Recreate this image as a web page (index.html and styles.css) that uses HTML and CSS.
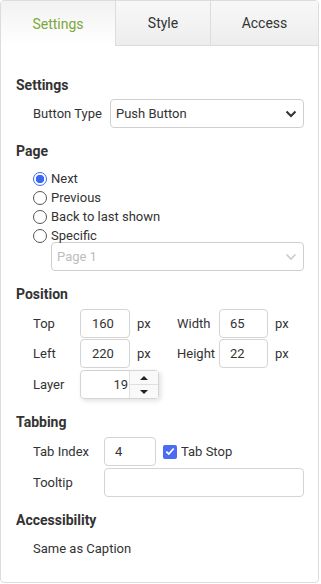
FILE: index.html
```html
<!DOCTYPE html>
<html>
<head>
<meta charset="utf-8">
<link rel="stylesheet" href="styles.css">
</head>
<body>
<div class="panel">
  <div class="tabs">
    <div class="tab active">Settings</div>
    <div class="tab t-style">Style</div>
    <div class="tab t-access">Access</div>
  </div>
  <div class="content">
    <h3 class="heading first">Settings</h3>
    <div class="row">
      <span class="lbl lbl-bt">Button Type</span>
      <div class="select">
        <span>Push Button</span>
        <svg class="chev" width="12" height="8" viewBox="0 0 12 8"><path d="M1.5 1.5 L6 6 L10.5 1.5" fill="none" stroke="#333" stroke-width="2"/></svg>
      </div>
    </div>

    <h3 class="heading">Page</h3>
    <div class="radios">
      <div class="radio-row"><span class="radio checked"></span><span>Next</span></div>
      <div class="radio-row"><span class="radio"></span><span>Previous</span></div>
      <div class="radio-row"><span class="radio"></span><span>Back to last shown</span></div>
      <div class="radio-row"><span class="radio"></span><span>Specific</span></div>
      <div class="select disabled">
        <span>Page 1</span>
        <svg class="chev" width="12" height="8" viewBox="0 0 12 8"><path d="M1.5 1.5 L6 6 L10.5 1.5" fill="none" stroke="#ccc" stroke-width="1.6"/></svg>
      </div>
    </div>

    <h3 class="heading">Position</h3>
    <div class="row pos">
      <span class="lbl lbl-pos">Top</span>
      <div class="input num">160</div>
      <span class="unit">px</span>
      <span class="lbl lbl-pos2">Width</span>
      <div class="input num2">65</div>
      <span class="unit">px</span>
    </div>
    <div class="row pos r2">
      <span class="lbl lbl-pos">Left</span>
      <div class="input num">220</div>
      <span class="unit">px</span>
      <span class="lbl lbl-pos2">Height</span>
      <div class="input num2">22</div>
      <span class="unit">px</span>
    </div>
    <div class="row pos r3">
      <span class="lbl lbl-pos">Layer</span>
      <div class="spin">
        <div class="spin-val">19</div>
        <div class="spin-btns">
          <div class="spin-btn up"><span class="tri-up"></span></div>
          <div class="spin-btn down"><span class="tri-down"></span></div>
        </div>
      </div>
    </div>

    <h3 class="heading">Tabbing</h3>
    <div class="row tab-row">
      <span class="lbl lbl-tab">Tab Index</span>
      <div class="input idx">4</div>
      <span class="check">
        <svg width="10" height="9" viewBox="0 0 10 9"><path d="M1.3 4.6 L3.8 7 L8.7 1.5" fill="none" stroke="#fff" stroke-width="1.8"/></svg>
      </span>
      <span class="check-lbl">Tab Stop</span>
    </div>
    <div class="row tab-row r2t">
      <span class="lbl lbl-tab">Tooltip</span>
      <div class="input tip"></div>
    </div>

    <h3 class="heading">Accessibility</h3>
    <div class="row plain">Same as Caption</div>
  </div>
</div>
</body>
</html>
```

FILE: styles.css
```css
* { box-sizing: border-box; }
html, body { margin: 0; padding: 0; background: #fff; }
body {
  font-family: Roboto, "Liberation Sans", Arial, sans-serif;
  font-size: 13px;
  color: #333;
}
.panel {
  width: 319px;
  height: 583px;
  border: 1px solid #dcdcdc;
  border-radius: 4px;
  overflow: hidden;
  background: #fff;
}
.tabs {
  display: flex;
  height: 45px;
}
.tab {
  display: flex;
  align-items: center;
  justify-content: center;
  font-size: 14px;
  color: #333;
  background: linear-gradient(#f8f8f8, #ededed);
  border-bottom: 1px solid #dcdcdc;
  border-left: 1px solid #dcdcdc;
}
.tab.active {
  width: 114px;
  border-left: none;
  border-bottom: none;
  color: #7ba83a;
  background: linear-gradient(#f2f2f2, #ffffff);
}
.t-style { width: 95px; }
.t-access { flex: 1; }
.content {
  padding: 29px 14px 0 15px;
}
.heading {
  margin: 13px 0 0 0;
  font-size: 14px;
  font-weight: bold;
  line-height: 20px;
  height: 20px;
  color: #333;
}
.heading.first { margin-top: 0; }
.row {
  display: flex;
  align-items: center;
  padding-left: 17px;
  margin-top: 4px;
}
.lbl { flex: none; }
.lbl-bt { width: 77px; }
.select {
  flex: 1;
  height: 29px;
  border: 1px solid #cfcfcf;
  border-radius: 4px;
  display: flex;
  align-items: center;
  justify-content: space-between;
  padding: 0 6px 0 5px;
  background: #fff;
}
.select.disabled { color: #bdbdbd; }
.chev { display: block; }

.radios {
  margin-top: 8px;
  padding-left: 17px;
}
.radio-row {
  display: flex;
  align-items: center;
  height: 19px;
}
.radio {
  width: 14px;
  height: 14px;
  border: 1px solid #555;
  border-radius: 50%;
  margin-right: 4px;
  flex: none;
  background: #fff;
}
.radio.checked {
  border: 1.5px solid #3b68f0;
  background: radial-gradient(circle, #3b68f0 0 4px, #fff 4.5px);
}
.radios .select {
  margin-top: -3px;
  margin-left: 18px;
}

.pos { margin-top: 5px; }
.pos.r2 { margin-top: 1px; }
.pos.r3 { margin-top: 2px; }
.lbl-pos { width: 47px; }
.lbl-pos2 { width: 42px; }
.input {
  height: 29px;
  border: 1px solid #d4d4d4;
  border-radius: 4px;
  display: flex;
  align-items: center;
  background: #fff;
  flex: none;
}
.num { width: 50px; padding-left: 11px; }
.num2 { width: 49px; padding-left: 10px; }
.unit { width: 47px; padding-left: 7px; flex: none; }
.spin {
  width: 79px;
  height: 29px;
  border: 1px solid #d4d4d4;
  border-radius: 4px;
  display: flex;
  box-shadow: 2px 2px 5px rgba(0,0,0,0.12);
  background: #fff;
}
.spin-val {
  flex: 1;
  display: flex;
  align-items: center;
  justify-content: flex-end;
  padding-right: 1px;
}
.spin-btns {
  width: 29px;
  display: flex;
  flex-direction: column;
  border-left: 1px solid #e2e2e2;
}
.spin-btn {
  flex: 1;
  display: flex;
  align-items: center;
  justify-content: center;
  background: #f9f9f9;
}
.spin-btn.up { border-bottom: 1px solid #e0e0e0; }
.tri-up {
  width: 0; height: 0;
  border-left: 4px solid transparent;
  border-right: 4px solid transparent;
  border-bottom: 4px solid #222;
}
.tri-down {
  width: 0; height: 0;
  border-left: 4px solid transparent;
  border-right: 4px solid transparent;
  border-top: 4px solid #222;
}

.tab-row { margin-top: 5px; }
.tab-row.r2t { margin-top: 2px; }
.lbl-tab { width: 71px; }
.idx { width: 52px; padding-left: 10px; }
.check {
  width: 14px;
  height: 14px;
  border-radius: 2px;
  background: #4a6cf3;
  margin-left: 7px;
  margin-right: 4px;
  display: flex;
  align-items: center;
  justify-content: center;
  flex: none;
}
.check svg { display: block; }
.tip { flex: 1; }
.plain {
  margin-top: 8px;
  height: 20px;
}
```
